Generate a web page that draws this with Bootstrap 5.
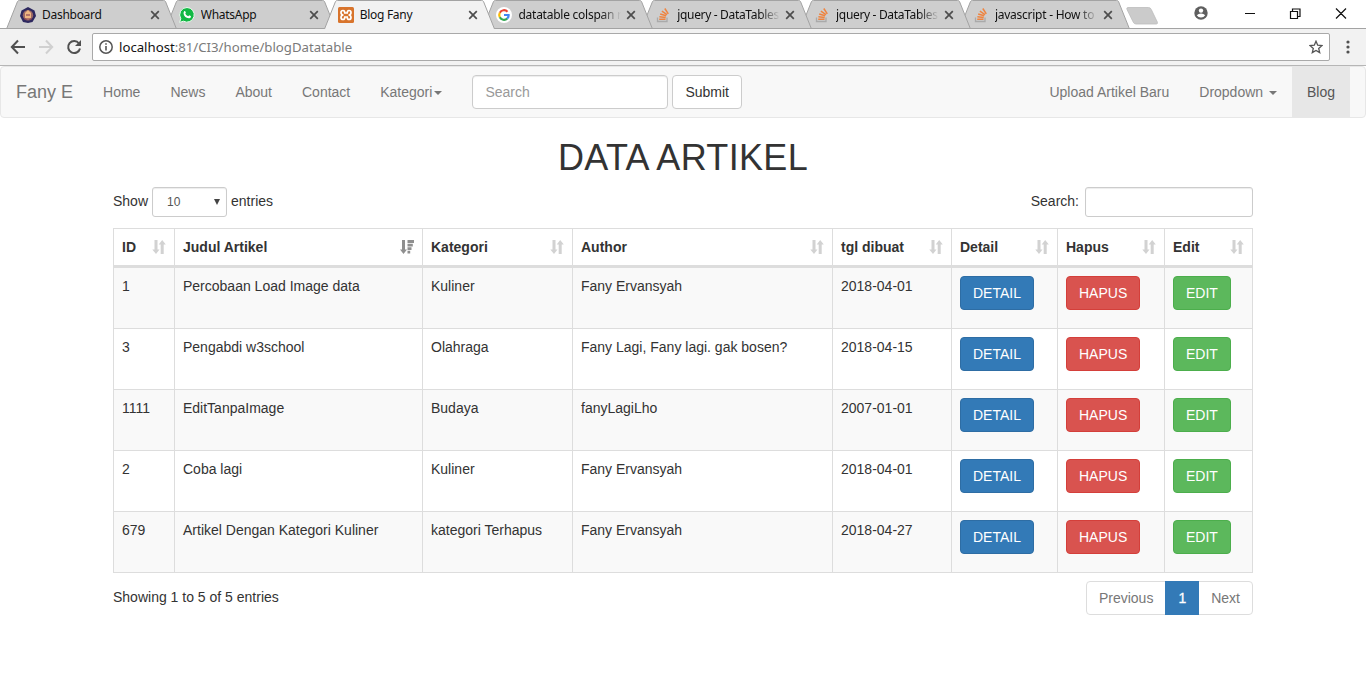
<!DOCTYPE html>
<html lang="id">
<head>
<meta charset="utf-8">
<title>Blog Fany</title>
<link href="https://cdn.jsdelivr.net/npm/bootstrap@5.3.0/dist/css/bootstrap.min.css" rel="stylesheet">
<style>
  body { font: 14px/20px "Liberation Sans", Arial, sans-serif; color: #333; background: #fff; overflow: hidden; }
  a { text-decoration: none; }
  svg { display: block; flex: none; }

  /* browser chrome */
  .chrome { font-family: "Noto Sans", "Open Sans", sans-serif; color: #111; }
  .tabstrip { height: 29px; padding-left: 6px; border-bottom: 1px solid #a3a3a3; }
  .tab-item { width: 171px; height: 29px; margin-right: -12.2px; padding: 1px 16px 0 14px; font-size: 12px; isolation: isolate; }
  .tab-front { z-index: 9; }
  .tab-d { z-index: 4; }
  .tab-c { z-index: 3; }
  .tab-b { z-index: 2; }
  .tab-a { z-index: 1; }
  .tab-shape { position: absolute; left: 0; top: 0; z-index: -1; }
  .tab-label { width: 103px; margin-left: 6px; white-space: nowrap; overflow: hidden; letter-spacing: -.28px; }
  .tab-label.faded { -webkit-mask-image: linear-gradient(90deg, #000 83px, transparent 103px); mask-image: linear-gradient(90deg, #000 83px, transparent 103px); letter-spacing: -.25px; }
  .tab-label.tight { letter-spacing: -.33px; }
  .tab-close { margin-left: 5px; }
  .new-tab { margin-left: 5px; }
  .toolbar { height: 37px; background: #f2f2f2; border-bottom: 1px solid #b6b6b6; padding: 0 16px 0 10px; }
  .omnibox { height: 28px; border: 1px solid #a9a9a9; border-radius: 2px; background: #fff; padding: 0 6px; margin: 0 16px 0 10px; font-size: 13.2px; }
  .omnibox .url { margin-left: 6px; }
  .omnibox .rest { color: #7a7a7a; }
  .window-icons { margin-top: -2px; }

  /* site navbar */
  .sitebar { height: 52px; background: #f8f8f8; border: 1px solid #e7e7e7; border-radius: 4px; padding: 0 15px 0 0; margin-bottom: 20px; }
  .sitebar .navbar-brand { font-size: 18px; color: #777; padding: 15px; margin: 0; line-height: 20px; }
  .sitebar .navbar-nav .nav-link { color: #777; padding: 15px; line-height: 20px; }
  .sitebar .navbar-nav .nav-link.active { background: #e7e7e7; color: #555; }
  .tri { display: inline-block; margin-left: 2px; border-top: 4px solid; border-left: 4px solid transparent; border-right: 4px solid transparent; vertical-align: middle; }
  .search-form { margin-left: 15px; }
  .field { border: 1px solid #ccc; border-radius: 4px; box-shadow: inset 0 1px 1px rgba(0,0,0,.075); background: #fff; font-size: 14px; line-height: 20px; color: #555; padding: 6px 12px; }
  .field::placeholder { color: #999; }
  .nav-search { width: 196px; height: 34px; }
  .btn { font-size: 14px; line-height: 20px; padding: 6px 12px; border-radius: 4px; }
  .btn-plain { border-color: #ccc; background: #fff; color: #333; }

  /* content */
  .page { width: 1140px; margin: 0 auto; }
  .page h1 { font-size: 36px; font-weight: 400; line-height: 39px; margin: 0 0 10px; letter-spacing: .33px; font-kerning: normal; }
  .field-sm { height: 30px; padding: 5px 10px; font-size: 12px; line-height: 18px; border-radius: 3px; }
  .len { width: 75px; padding-left: 14px; appearance: none; }
  .len-arrow { right: 6px; top: 11px; }
  .find { width: 168px; margin-left: 6px; }
  .raised { padding-bottom: 2px; }
  .grid-table { --bs-table-striped-bg: #f9f9f9; --bs-table-striped-color: #333; --bs-table-color: #333; table-layout: fixed; border-collapse: separate; border-spacing: 0; width: 1140px; border: solid #ddd; border-width: 1px 0 0 1px; margin: 11px 0 8px; }
  .grid-table > :not(caption) > * > * { padding: 8px; border: solid #ddd; border-width: 0 1px 1px 0; line-height: 20px; }
  .grid-table > thead > tr > th { border-bottom-width: 3px; }
  .grid-table > tbody > tr > td { height: 61px; vertical-align: top; }
  .btn-detail { background: #337ab7; border-color: #2e6da4; color: #fff; }
  .btn-hapus { background: #d9534f; border-color: #d43f3a; color: #fff; }
  .btn-edit { background: #5cb85c; border-color: #4cae4c; color: #fff; }
  .pager-list { --bs-pagination-border-radius: 4px; }
  .pager-list .page-link { padding: 6px 12px; font-size: 14px; line-height: 20px; color: #777; border-color: #ddd; }
  .pager-list .active .page-link { background: #337ab7; border-color: #337ab7; color: #fff; -webkit-text-stroke: .3px #fff; }
</style>
</head>
<body>
<svg width="0" height="0" class="position-absolute">
  <symbol id="tab" viewBox="0 0 171 29"><path d="M.5 29 11.500 1.500Q12 .5 13.500 .5H157.500Q159 .5 159.500 1.500L170.500 29" stroke="#a3a3a3"/></symbol>
  <symbol id="x" viewBox="0 0 10 10"><path d="M1.200 1.200l7.600 7.600M8.800 1.200l-7.600 7.600" stroke="#4d4d4d" stroke-width="1.700"/></symbol>
  <symbol id="so" viewBox="0 0 16 16"><path d="M2.500 10.500v4h9.500v-4" fill="none" stroke="#aaa" stroke-width="1.300"/><path d="M4.200 12.300h6.300M4.400 9.800l6.300.7M5.200 7l6 1.800M6.900 4.200l5.100 3.500M9.800 1.500l3.500 5.300" fill="none" stroke="#ee8440" stroke-width="1.500"/></symbol>
  <symbol id="both" viewBox="0 0 14 14"><path d="M2.500 0h3v9.500h2L4 14 .3 9.500h2.200zM8.700 14h3V4.500h2.100L10.200 0 6.700 4.500h2z"/></symbol>
  <symbol id="desc" viewBox="0 0 14 14"><path d="M2 0h3v9.500h2L3.500 14 0 9.500h2zM7.500 0H14v3H7.500zM7.500 3.700H12.800v2.800H7.500zM7.500 7.200h4V10h-4zM7.500 10.700h2.700v2.800H7.500z"/></symbol>
</svg>

<div class="chrome">
  <div class="tabstrip d-flex position-relative">
    <div class="tab-item tab-c position-relative d-flex align-items-center flex-shrink-0">
      <svg class="tab-shape" width="171" height="28" fill="#cecece"><use href="#tab" width="171" height="29"/></svg>
      <svg width="16" height="16"><path d="M8 0l6.500 3.500L16 9l-3.500 6L8 16l-5-1-3-6 1.500-5.500z" fill="#2d285f"/><circle cx="8" cy="8.300" r="5.200" fill="#9c6967"/><path d="M5 6l3-3 3 3v5l-3 2-3-2z" fill="#efb680"/><path d="M4 12h8M6 8h4" stroke="#7a3250" stroke-width="1.200"/></svg>
      <div class="tab-label">Dashboard</div><svg class="tab-close" width="10" height="10"><use href="#x"/></svg>
    </div>
    <div class="tab-item tab-b position-relative d-flex align-items-center flex-shrink-0">
      <svg class="tab-shape" width="171" height="28" fill="#cecece"><use href="#tab" width="171" height="29"/></svg>
      <svg width="16" height="16"><path d="M8 .5a7.300 7.300 0 1 1-3.600 13.700L.6 15.400l1.200-3.700A7.300 7.300 0 0 1 8 .5z" fill="#12b844" stroke="#eefaf0"/><path d="M5.200 4.200c.7-.6 1.100-.3 1.700 1.500l-.6.9c.7 1.300 1.600 2.200 3 2.700l.9-1c1.700.7 2 .9 1.600 1.900-.6 1.400-2.600 1.500-4.600.3C5 9.200 3.800 6 5.200 4.200z" fill="#fff"/></svg>
      <div class="tab-label">WhatsApp</div><svg class="tab-close" width="10" height="10"><use href="#x"/></svg>
    </div>
    <div class="tab-item tab-front position-relative d-flex align-items-center flex-shrink-0">
      <svg class="tab-shape" width="171" height="29" fill="#f2f2f2"><use href="#tab" width="171" height="29"/></svg>
      <svg width="16" height="16"><rect width="16" height="16" rx="1.500" fill="#d8742c"/><path d="M5.500 8C3.500 8 3 6.800 3 5.500S4 3.500 5 3.500c1.500 0 1.800 1.500 1.800 2.500h2.400c0-1 .3-2.500 1.800-2.500 1 0 2 .7 2 2S12.500 8 10.500 8c2 0 2.500 1.200 2.500 2.500s-1 2-2 2c-1.500 0-1.800-1.500-1.800-2.500H6.800c0 1-.3 2.500-1.800 2.500-1 0-2-.7-2-2S3.500 8 5.500 8z" fill="none" stroke="#fff" stroke-width="1.700"/></svg>
      <div class="tab-label">Blog Fany</div><svg class="tab-close" width="10" height="10"><use href="#x"/></svg>
    </div>
    <div class="tab-item tab-d position-relative d-flex align-items-center flex-shrink-0">
      <svg class="tab-shape" width="171" height="28" fill="#cecece"><use href="#tab" width="171" height="29"/></svg>
      <svg width="16" height="16" fill="none" stroke-width="2.200"><circle cx="8" cy="8" r="8" fill="#fff"/><path d="M11.500 4.700A4.800 4.800 0 0 0 3.800 5.700" stroke="#ea4335"/><path d="M3.800 5.700a4.800 4.800 0 0 0 0 4.600" stroke="#fbbc05"/><path d="M3.800 10.300a4.800 4.800 0 0 0 7.400 1.300" stroke="#34a853"/><path d="M11.200 11.600Q12.800 10 12.600 8H8" stroke="#4285f4"/></svg>
      <div class="tab-label faded">datatable colspan r</div><svg class="tab-close" width="10" height="10"><use href="#x"/></svg>
    </div>
    <div class="tab-item tab-c position-relative d-flex align-items-center flex-shrink-0">
      <svg class="tab-shape" width="171" height="28" fill="#cecece"><use href="#tab" width="171" height="29"/></svg>
      <svg width="16" height="16"><use href="#so"/></svg>
      <div class="tab-label faded tight">jquery - DataTables</div><svg class="tab-close" width="10" height="10"><use href="#x"/></svg>
    </div>
    <div class="tab-item tab-b position-relative d-flex align-items-center flex-shrink-0">
      <svg class="tab-shape" width="171" height="28" fill="#cecece"><use href="#tab" width="171" height="29"/></svg>
      <svg width="16" height="16"><use href="#so"/></svg>
      <div class="tab-label faded tight">jquery - DataTables</div><svg class="tab-close" width="10" height="10"><use href="#x"/></svg>
    </div>
    <div class="tab-item tab-a position-relative d-flex align-items-center flex-shrink-0">
      <svg class="tab-shape" width="171" height="28" fill="#cecece"><use href="#tab" width="171" height="29"/></svg>
      <svg width="16" height="16"><use href="#so"/></svg>
      <div class="tab-label faded">javascript - How to</div><svg class="tab-close" width="10" height="10"><use href="#x"/></svg>
    </div>
    <svg class="new-tab" width="42" height="29"><path d="M5 7.500h20.500q2 0 2.800 2l6 12.500q.7 2-1 2H13q-2 0-2.800-2L4 9.500q-.8-2 1-2z" fill="#cbcbcb" stroke="#bdbdbd" stroke-width=".8"/></svg>
    <svg class="ms-auto window-icons" width="180" height="29" fill="none" stroke="#111" stroke-width="1.200">
      <circle cx="15" cy="15" r="6.700" fill="#5f5f5f" stroke="none"/><circle cx="15" cy="12.600" r="2.200" fill="#fff" stroke="none"/><path d="M10.800 17.300q1.500-1.900 4.200-1.900t4.200 1.900q-1.500 2.300-4.200 2.300t-4.200-2.300z" fill="#fff" stroke="none"/>
      <path d="M59 15.500h10M104.500 13.500h7v7h-7zM106.500 13.500v-2.500h7.500v7.500h-2.500M150 10.500l10 10M160 10.500l-10 10"/>
    </svg>
  </div>
  <div class="toolbar d-flex align-items-center">
    <svg width="72" height="16" fill="none" stroke-width="2"><path d="M15 8H2M8 1.500 1.800 8 8 14.500" stroke="#505050"/><path d="M29 8h13M36 1.500 42.200 8 36 14.500" stroke="#d0d0d0"/><path d="M69 4.500A6 6 0 1 0 70 9.500" stroke="#505050"/><path d="M71 1v6h-6z" fill="#505050"/></svg>
    <div class="omnibox d-flex align-items-center flex-grow-1">
      <svg width="14" height="14"><circle cx="7" cy="7" r="6.200" fill="none" stroke="#555" stroke-width="1.500"/><path d="M7 6v4.500M7 3.300v1.500" stroke="#555" stroke-width="1.600"/></svg>
      <span class="url">localhost<span class="rest">:81/CI3/home/blogDatatable</span></span>
      <svg class="ms-auto" width="14" height="14"><path d="M7 1.200l1.700 4 4.300.4-3.300 2.800 1 4.200L7 10.400l-3.700 2.200 1-4.200L1 5.600l4.300-.4z" fill="none" stroke="#555" stroke-width="1.300"/></svg>
    </div>
    <svg width="4" height="16" fill="#505050"><circle cx="2" cy="3" r="1.600"/><circle cx="2" cy="8" r="1.600"/><circle cx="2" cy="13" r="1.600"/></svg>
  </div>
</div>

<nav class="sitebar navbar navbar-expand align-items-stretch">
  <a class="navbar-brand" href="#">Fany E</a>
  <ul class="navbar-nav">
    <li class="nav-item"><a class="nav-link" href="#">Home</a></li>
    <li class="nav-item"><a class="nav-link" href="#">News</a></li>
    <li class="nav-item"><a class="nav-link" href="#">About</a></li>
    <li class="nav-item"><a class="nav-link" href="#">Contact</a></li>
    <li class="nav-item"><a class="nav-link" href="#">Kategori<span class="tri"></span></a></li>
  </ul>
  <form class="d-flex align-items-center gap-1 search-form">
    <input class="field nav-search" type="text" placeholder="Search">
    <button class="btn btn-plain" type="button">Submit</button>
  </form>
  <ul class="navbar-nav ms-auto">
    <li class="nav-item"><a class="nav-link" href="#">Upload Artikel Baru</a></li>
    <li class="nav-item"><a class="nav-link" href="#">Dropdown <span class="tri"></span></a></li>
    <li class="nav-item"><a class="nav-link active" href="#">Blog</a></li>
  </ul>
</nav>

<main class="page">
  <h1 class="text-center">DATA ARTIKEL</h1>
  <div class="d-flex justify-content-between">
    <label class="d-flex align-items-center gap-1"><span class="raised">Show</span>
      <span class="position-relative d-block"><select class="field field-sm len d-block"><option>10</option></select>
      <svg class="len-arrow position-absolute" width="8" height="8"><path d="M1 1h6L4 7z" fill="#444"/></svg></span>
      <span class="raised">entries</span></label>
    <label class="d-flex align-items-center"><span class="raised">Search:</span><input class="field field-sm find" type="text"></label>
  </div>
  <table class="table table-striped grid-table">
    <colgroup><col width="61"><col width="248"><col width="150"><col width="260"><col width="119"><col width="106"><col width="107"><col width="88"></colgroup>
    <thead><tr>
      <th><div class="d-flex justify-content-between align-items-center">ID<svg width="14" height="14" fill="#d2d2d2"><use href="#both"/></svg></div></th>
      <th><div class="d-flex justify-content-between align-items-center">Judul Artikel<svg width="14" height="14" fill="#8f8f8f"><use href="#desc"/></svg></div></th>
      <th><div class="d-flex justify-content-between align-items-center">Kategori<svg width="14" height="14" fill="#d2d2d2"><use href="#both"/></svg></div></th>
      <th><div class="d-flex justify-content-between align-items-center">Author<svg width="14" height="14" fill="#d2d2d2"><use href="#both"/></svg></div></th>
      <th><div class="d-flex justify-content-between align-items-center">tgl dibuat<svg width="14" height="14" fill="#d2d2d2"><use href="#both"/></svg></div></th>
      <th><div class="d-flex justify-content-between align-items-center">Detail<svg width="14" height="14" fill="#d2d2d2"><use href="#both"/></svg></div></th>
      <th><div class="d-flex justify-content-between align-items-center">Hapus<svg width="14" height="14" fill="#d2d2d2"><use href="#both"/></svg></div></th>
      <th><div class="d-flex justify-content-between align-items-center">Edit<svg width="14" height="14" fill="#d2d2d2"><use href="#both"/></svg></div></th>
    </tr></thead>
    <tbody>
      <tr><td>1</td><td>Percobaan Load Image data</td><td>Kuliner</td><td>Fany Ervansyah</td><td>2018-04-01</td><td><a class="btn btn-detail">DETAIL</a></td><td><a class="btn btn-hapus">HAPUS</a></td><td><a class="btn btn-edit">EDIT</a></td></tr>
      <tr><td>3</td><td>Pengabdi w3school</td><td>Olahraga</td><td>Fany Lagi, Fany lagi. gak bosen?</td><td>2018-04-15</td><td><a class="btn btn-detail">DETAIL</a></td><td><a class="btn btn-hapus">HAPUS</a></td><td><a class="btn btn-edit">EDIT</a></td></tr>
      <tr><td>1111</td><td>EditTanpaImage</td><td>Budaya</td><td>fanyLagiLho</td><td>2007-01-01</td><td><a class="btn btn-detail">DETAIL</a></td><td><a class="btn btn-hapus">HAPUS</a></td><td><a class="btn btn-edit">EDIT</a></td></tr>
      <tr><td>2</td><td>Coba lagi</td><td>Kuliner</td><td>Fany Ervansyah</td><td>2018-04-01</td><td><a class="btn btn-detail">DETAIL</a></td><td><a class="btn btn-hapus">HAPUS</a></td><td><a class="btn btn-edit">EDIT</a></td></tr>
      <tr><td>679</td><td>Artikel Dengan Kategori Kuliner</td><td>kategori Terhapus</td><td>Fany Ervansyah</td><td>2018-04-27</td><td><a class="btn btn-detail">DETAIL</a></td><td><a class="btn btn-hapus">HAPUS</a></td><td><a class="btn btn-edit">EDIT</a></td></tr>
    </tbody>
  </table>
  <div class="d-flex justify-content-between align-items-center">
    <div class="raised">Showing 1 to 5 of 5 entries</div>
    <ul class="pagination pager-list m-0">
      <li class="page-item"><a class="page-link" href="#">Previous</a></li>
      <li class="page-item active"><a class="page-link" href="#">1</a></li>
      <li class="page-item"><a class="page-link" href="#">Next</a></li>
    </ul>
  </div>
</main>
<script src="https://cdn.jsdelivr.net/npm/bootstrap@5.3.0/dist/js/bootstrap.bundle.min.js"></script>
</body>
</html>
